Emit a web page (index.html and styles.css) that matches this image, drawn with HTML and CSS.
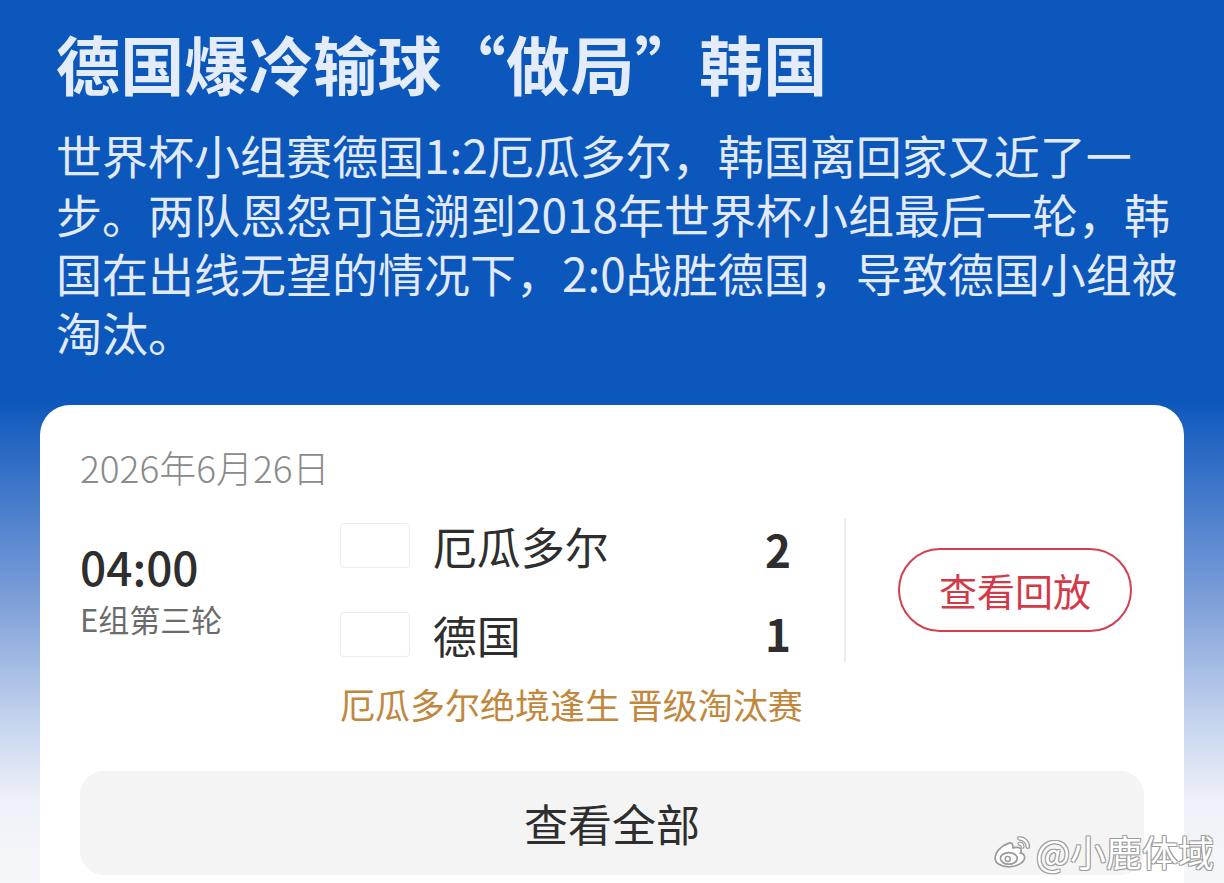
FILE: index.html
```html
<!DOCTYPE html>
<html lang="zh-CN">
<head>
<meta charset="utf-8">
<title>德国爆冷输球“做局”韩国</title>
<link rel="stylesheet" href="styles.css">
</head>
<body>
<div class="page">
  <header class="hero">
    <h1 class="title">德国爆冷输球“做局”韩国</h1>
    <p class="summary">世界杯小组赛德国1:2厄瓜多尔，韩国离回家又近了一步。两队恩怨可追溯到2018年世界杯小组最后一轮，韩国在出线无望的情况下，2:0战胜德国，导致德国小组被淘汰。</p>
  </header>

  <section class="card">
    <div class="date">2026年6月26日</div>
    <div class="match">
      <div class="when">
        <div class="time">04:00</div>
        <div class="round">E组第三轮</div>
      </div>
      <div class="teams">
        <div class="team">
          <span class="flag"></span>
          <span class="name">厄瓜多尔</span>
          <span class="score">2</span>
        </div>
        <div class="team">
          <span class="flag"></span>
          <span class="name">德国</span>
          <span class="score">1</span>
        </div>
      </div>
      <div class="divider"></div>
      <div class="action">
        <button class="replay">查看回放</button>
      </div>
    </div>
    <div class="note">厄瓜多尔绝境逢生 晋级淘汰赛</div>
    <button class="all">查看全部</button>
  </section>

  <div class="watermark">
    <svg class="weibo" width="40" height="34" viewBox="0 0 38 32">
      <path d="M15 9c-6 2-12 8-12 14 0 5 6 8 13 8 9 0 15-5 15-9 0-3-3-4-4-4 1-2 1-4-1-5-2-1-5 0-6 0 0-1 0-3-1-4-1-1-2-1-4 0z" fill="#fff" stroke="#9a9a9a" stroke-width="1.6"/>
      <ellipse cx="16" cy="23" rx="8" ry="5.5" fill="#fff" stroke="#9a9a9a" stroke-width="1.6"/>
      <circle cx="15" cy="23.5" r="2.4" fill="#fff" stroke="#9a9a9a" stroke-width="1.4"/>
      <path d="M26 4c4 0 8 3 8 8" fill="none" stroke="#9a9a9a" stroke-width="4.4" stroke-linecap="round"/>
      <path d="M26 4c4 0 8 3 8 8" fill="none" stroke="#fff" stroke-width="2" stroke-linecap="round"/>
      <path d="M26 9c2 0 3 1 3 3" fill="none" stroke="#9a9a9a" stroke-width="3.8" stroke-linecap="round"/>
      <path d="M26 9c2 0 3 1 3 3" fill="none" stroke="#fff" stroke-width="1.6" stroke-linecap="round"/>
    </svg>
    <span class="handle">@小鹿体域</span>
  </div>
</div>
</body>
</html>
```

FILE: styles.css
```css
* { box-sizing: border-box; }

html, body {
  margin: 0;
  padding: 0;
}

body {
  width: 1224px;
  height: 883px;
  overflow: hidden;
  font-family: "Noto Sans CJK SC", "Noto Sans", sans-serif;
  background: linear-gradient(180deg,
    #0b57bb 0px,
    #0c57bb 400px,
    #3a74c8 480px,
    #7d9fd8 600px,
    #c4d3ee 720px,
    #eef1f8 800px,
    #f6f7fa 883px);
}

.page {
  position: relative;
  height: 883px;
}

.hero {
  padding: 24px 38px 0 56px;
}

.title {
  margin: 0;
  font-size: 64px;
  line-height: 77px;
  font-weight: 700;
  color: #e4ecf9;
  letter-spacing: 0.3px;
}

.summary {
  margin: 24px 0 0;
  font-size: 46px;
  line-height: 59px;
  font-weight: 400;
  color: #e2eaf8;
}

.card {
  margin: 44px 40px 0;
  background: #ffffff;
  border-radius: 30px 30px 0 0;
  padding: 37px 52px 40px 40px;
  height: 560px;
}

.date {
  font-size: 37px;
  line-height: 50px;
  color: #8a8a8a;
  font-weight: 300;
}

.match {
  display: flex;
  align-items: center;
  margin-top: 9px;
}

.when {
  width: 260px;
  display: flex;
  flex-direction: column;
}

.time {
  font-size: 46px;
  line-height: 50px;
  font-weight: 500;
  color: #2e2e2e;
}

.round {
  margin-top: 8px;
  font-size: 31px;
  line-height: 40px;
  color: #6b6b6b;
}

.teams {
  width: 452px;
  display: flex;
  flex-direction: column;
}

.team {
  height: 89px;
  display: flex;
  align-items: center;
}

.flag {
  width: 70px;
  height: 45px;
  border: 1.5px solid #ececec;
  border-radius: 4px;
  background: #fff;
  margin-right: 23px;
  flex: none;
}

.name {
  flex: 1;
  font-size: 44px;
  line-height: 56px;
  color: #2e2e2e;
}

.score {
  font-size: 44px;
  line-height: 56px;
  font-weight: 700;
  color: #2e2e2e;
  margin-top: 6px;
}

.team + .team .score {
  margin-top: -4px;
}

.divider {
  width: 2px;
  height: 145px;
  background: #ececec;
  margin-left: 53px;
}

.action {
  margin-left: 52px;
}

.replay {
  width: 234px;
  height: 84px;
  border: 2px solid #d2404d;
  border-radius: 42px;
  background: #fff;
  color: #d33a48;
  font-family: inherit;
  font-size: 38px;
  line-height: 1;
  padding: 0;
}

.note {
  margin: 3px 0 0 260px;
  font-size: 35px;
  line-height: 44px;
  color: #c1873d;
  white-space: nowrap;
}

.all {
  display: block;
  width: 1064px;
  height: 104px;
  margin-top: 45px;
  border: none;
  border-radius: 24px;
  background: #f4f4f4;
  color: #2e2e2e;
  font-family: inherit;
  font-size: 44px;
  padding: 0;
}

.watermark {
  position: absolute;
  right: 10px;
  bottom: 12px;
  display: flex;
  align-items: center;
  gap: 4px;
}

.handle {
  font-size: 36px;
  line-height: 40px;
  color: #ffffff;
  text-shadow:
    -1px -1px 0 #9c9c9c, 1px -1px 0 #9c9c9c,
    -1px 1px 0 #9c9c9c, 1px 1px 0 #9c9c9c;
}
```
